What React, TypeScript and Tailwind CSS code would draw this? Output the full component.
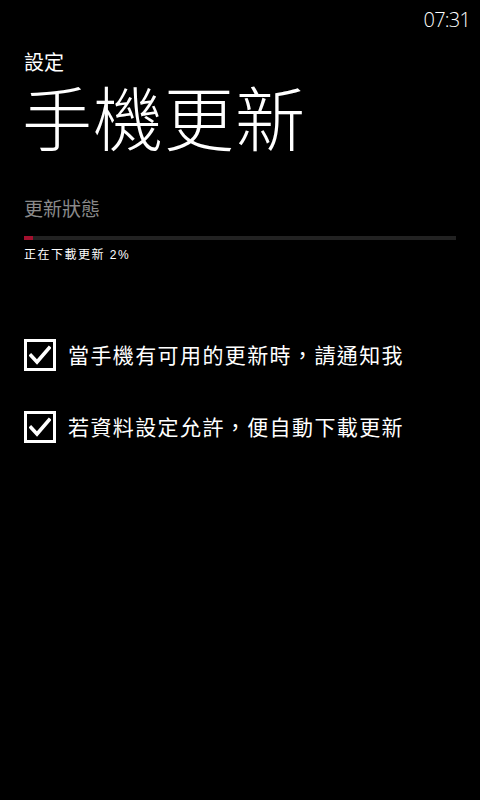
const cjk = { fontFamily: '"Liberation Sans", "Noto Sans CJK TC", sans-serif' };

function CheckBox() {
  return (
    <div className="w-8 h-8 shrink-0 border-[3px] border-white flex items-center justify-center">
      <svg width="22" height="20" viewBox="0 0 22 20" fill="none">
        <path d="M2 10.5 L8 17 L20 3" stroke="white" strokeWidth="3.6" strokeLinecap="square" strokeLinejoin="miter" />
      </svg>
    </div>
  );
}

function Option({ label }: { label: string }) {
  return (
    <div className="flex items-center gap-3">
      <CheckBox />
      <span className="text-[21px] text-white leading-none tracking-[1.4px]">{label}</span>
    </div>
  );
}

export default function App() {
  const progress = 2;
  return (
    <div className="w-[480px] h-[800px] bg-black text-white overflow-hidden" style={cjk}>
      <div className="flex justify-end pr-[10px] pt-[5px] h-[32px]">
        <span className="text-[20px] font-light text-white tracking-[-0.8px]" style={{ fontFamily: '"Open Sans", sans-serif' }}>07:31</span>
      </div>
      <div className="px-6">
        <div className="text-[20px] leading-none mt-[21px]">設定</div>
        <div className="text-[70px] leading-[78px] mt-[10px] -ml-[2px] font-light tracking-[1px]">手機更新</div>
        <div className="text-[19px] leading-none text-[#8a8a8a] mt-[39px]">更新狀態</div>
        <div className="mt-[17px] h-[4px] bg-[#222222] w-[432px] flex">
          <div className="h-full bg-[#a3102e]" style={{ width: `${progress}%` }} />
        </div>
        <div className="text-[12px] leading-none mt-[9px] tracking-[1.5px]">正在下載更新 2%</div>
        <div className="mt-[78px] flex flex-col gap-10">
          <Option label="當手機有可用的更新時，請通知我" />
          <Option label="若資料設定允許，便自動下載更新" />
        </div>
      </div>
    </div>
  );
}
